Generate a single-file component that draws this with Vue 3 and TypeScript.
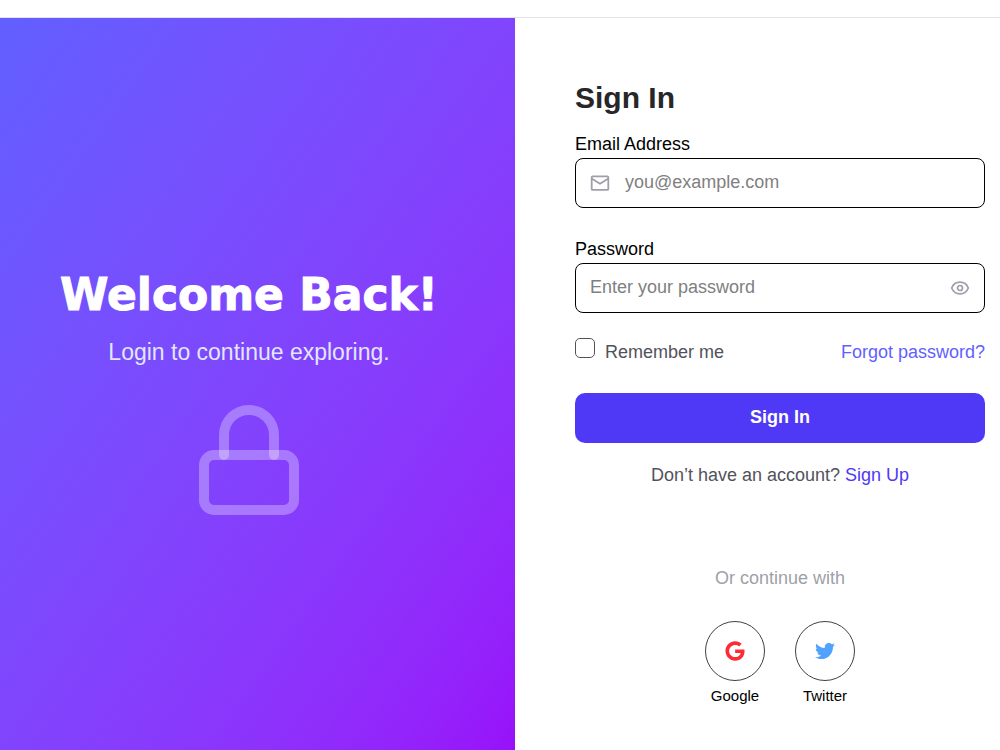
<script setup lang="ts">
import { ref } from 'vue'

const email = ref('')
const password = ref('')
const remember = ref(false)
const showPassword = ref(false)
</script>

<template>
  <main class="page">
    <section class="welcome">
      <h1>Welcome Back!</h1>
      <p>Login to continue exploring.</p>
      <svg class="lock" viewBox="0 0 100 110" fill="none" stroke="#fff" stroke-opacity="0.3" stroke-width="10" aria-hidden="true">
        <rect x="5" y="50" width="90" height="55" rx="10" />
        <path d="M25 50V30a25 25 0 0 1 50 0v20" stroke-linecap="round" />
      </svg>
    </section>

    <section class="panel">
      <h2>Sign In</h2>
      <form @submit.prevent>
        <label class="caption" for="email">Email Address</label>
        <div class="field">
          <svg class="glyph" viewBox="0 0 20 20" fill="none" stroke="#9f9fa9" stroke-width="1.8" stroke-linejoin="round" stroke-linecap="round" aria-hidden="true">
            <rect x="1.7" y="3.3" width="16.600" height="13.600" rx="1" />
            <path d="M2 5.800l8 5 8-5" />
          </svg>
          <input id="email" v-model="email" type="email" placeholder="you@example.com" />
        </div>

        <label class="caption" for="password">Password</label>
        <div class="field">
          <input id="password" v-model="password" :type="showPassword ? 'text' : 'password'" placeholder="Enter your password" />
          <button class="reveal" type="button" aria-label="Show password" @click="showPassword = !showPassword">
            <svg class="glyph" viewBox="0 0 20 20" fill="none" stroke="#9f9fa9" stroke-width="1.7" aria-hidden="true">
              <path d="M1.700 10C3.200 6.200 6.300 4.200 10 4.200s6.800 2 8.300 5.800c-1.500 3.800-4.600 5.800-8.300 5.800s-6.800-2-8.300-5.800z" stroke-linejoin="round" />
              <circle cx="10" cy="10" r="2.500" />
            </svg>
          </button>
        </div>

        <div class="options">
          <label class="remember"><input v-model="remember" type="checkbox" /><span>Remember me</span></label>
          <a class="forgot" href="#">Forgot password?</a>
        </div>

        <button class="submit" type="submit">Sign In</button>
      </form>
      <p class="signup">Don’t have an account? <a href="#">Sign Up</a></p>
      <p class="alternative">Or continue with</p>
      <div class="providers">
        <button class="provider" type="button">
          <span class="disc">
            <svg viewBox="0 0 488 512" fill="#fb2c36" aria-hidden="true">
              <path d="M488 261.8C488 403.3 391.1 504 248 504 110.8 504 0 393.2 0 256S110.8 8 248 8c66.8 0 123 24.5 166.3 64.9l-67.5 64.9C258.5 52.6 94.3 116.6 94.3 256c0 86.5 69.1 156.6 153.7 156.6 98.2 0 135-70.4 140.8-106.9H248v-85.3h236.1c2.3 12.7 3.9 24.9 3.9 41.4z" />
            </svg>
          </span>
          Google
        </button>
        <button class="provider" type="button">
          <span class="disc">
            <svg viewBox="0 0 512 512" fill="#51a2ff" aria-hidden="true">
              <path d="M459.37 151.716c.325 4.548.325 9.097.325 13.645 0 138.72-105.583 298.558-298.558 298.558-59.452 0-114.68-17.219-161.137-47.106 8.447.974 16.568 1.299 25.34 1.299 49.055 0 94.213-16.568 130.274-44.832-46.132-.975-84.792-31.188-98.112-72.772 6.498.974 12.995 1.624 19.818 1.624 9.421 0 18.843-1.3 27.614-3.573-48.081-9.747-84.143-51.98-84.143-102.985v-1.299c13.969 7.797 30.214 12.67 47.431 13.319-28.264-18.843-46.781-51.005-46.781-87.391 0-19.492 5.197-37.36 14.294-52.954 51.655 63.675 129.3 105.258 216.365 109.807-1.624-7.797-2.599-15.918-2.599-24.04 0-57.828 46.782-104.934 104.934-104.934 30.213 0 57.502 12.67 76.67 33.137 23.715-4.548 46.456-13.32 66.599-25.34-7.798 24.366-24.366 44.833-46.132 57.827 21.117-2.273 41.584-8.122 60.426-16.243-14.292 20.791-32.161 39.308-52.628 54.253z" />
            </svg>
          </span>
          Twitter
        </button>
      </div>
    </section>
  </main>
</template>

<style>
body {
  margin: 0;
  background: #fff;
}
</style>

<style scoped>
.page {
  display: grid;
  grid-template-columns: 515fr 485fr;
  min-height: calc(100vh - 18px);
  margin-top: 17px;
  border-top: 1px solid #e4e4e7;
  font-family: "Liberation Sans", Arial, sans-serif;
  font-size: 18px;
  line-height: 24px;
  color: #000;
}

h1,
h2,
p {
  margin: 0;
}

a {
  text-decoration: none;
}

button {
  border: 0;
  padding: 0;
  background: none;
  font: inherit;
  color: inherit;
  cursor: pointer;
}

.welcome {
  display: flex;
  flex-direction: column;
  align-items: center;
  justify-content: center;
  padding: 12px 17px 0 0;
  background: linear-gradient(to bottom right in oklab, #615fff, #9810fa);
  color: #fff;
  text-align: center;
}

.welcome h1 {
  font-family: "Arial Black", "DejaVu Sans", sans-serif;
  font-weight: 900;
  font-size: 44px;
  line-height: 60px;
  -webkit-text-stroke: 1px #fff;
}

.welcome p {
  margin: 11px 0 37px;
  font-size: 23px;
  line-height: 32px;
  color: #e0e7ff;
}

.lock {
  width: 100px;
  height: 110px;
}

.panel {
  padding: 60px 15px 40px 60px;
}

.panel h2 {
  margin-bottom: 14px;
  font-size: 30px;
  line-height: 40px;
  color: #27272a;
}

.caption {
  display: block;
}

.field {
  display: flex;
  align-items: center;
  gap: 15px;
  height: 48px;
  margin: 2px 0 25px;
  padding: 0 14px;
  border: 1px solid #000;
  border-radius: 8px;
}

.field + .caption {
  margin-top: 29px;
}

.field input {
  flex: 1;
  min-width: 0;
  height: 100%;
  border: 0;
  padding: 0 0 2px;
  outline: none;
  background: none;
  font: inherit;
}

.field input::placeholder {
  color: #808080;
}

.glyph {
  display: block;
  flex: none;
  width: 20px;
  height: 20px;
}

.options {
  display: flex;
  justify-content: space-between;
}

.remember {
  display: flex;
  gap: 10px;
  color: #52525c;
}

.remember span,
.forgot {
  padding-top: 2px;
}

.remember input {
  appearance: none;
  width: 20px;
  height: 20px;
  margin: 0;
  border: 1px solid #52525c;
  border-radius: 5px;
}

.remember input:checked {
  background: #4f39f6;
}

.forgot {
  color: #615fff;
}

.submit {
  width: 100%;
  height: 50px;
  margin-top: 29px;
  padding-bottom: 2px;
  border-radius: 10px;
  background: #4f39f6;
  color: #fff;
  font-weight: bold;
}

.signup {
  margin-top: 20px;
  text-align: center;
  color: #52525c;
}

.signup a {
  color: #4f39f6;
}

.alternative {
  margin-top: 79px;
  text-align: center;
  color: #9f9fa9;
}

.providers {
  display: flex;
  justify-content: center;
  gap: 30px;
  margin-top: 31px;
}

.provider {
  display: flex;
  flex-direction: column;
  align-items: center;
  gap: 5px;
  width: 60px;
  font-size: 15px;
  line-height: 20px;
}

.disc {
  display: flex;
  align-items: center;
  justify-content: center;
  box-sizing: border-box;
  width: 60px;
  height: 60px;
  border: 1px solid #3f3f46;
  border-radius: 50%;
}

.disc svg {
  width: 20px;
  height: 20px;
}
</style>
